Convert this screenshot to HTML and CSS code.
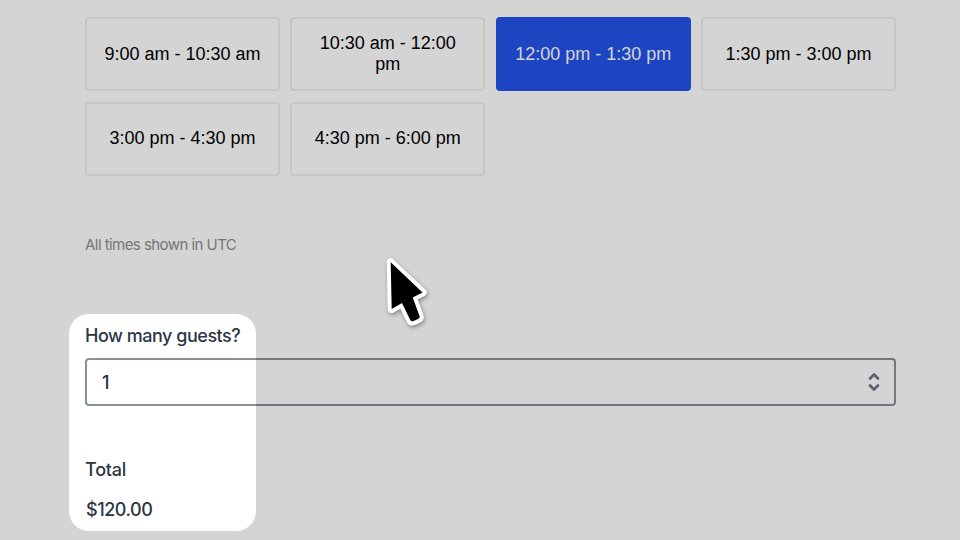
FILE: index.html
```html
<!DOCTYPE html>
<html lang="en">
<head>
<meta charset="utf-8">
<title>Booking</title>
<link rel="stylesheet" href="styles.css">
</head>
<body>
<main class="page">
  <div class="slots">
    <button class="slot">9:00 am - 10:30 am</button>
    <button class="slot">10:30 am - 12:00 pm</button>
    <button class="slot slot-active">12:00 pm - 1:30 pm</button>
    <button class="slot">1:30 pm - 3:00 pm</button>
    <button class="slot">3:00 pm - 4:30 pm</button>
    <button class="slot">4:30 pm - 6:00 pm</button>
  </div>
  <p class="note">All times shown in UTC</p>
  <p class="label">How many guests?</p>
  <div class="select">
    <span class="select-value">1</span>
    <svg class="chevrons" width="14" height="22" viewBox="0 0 14 22" fill="none" stroke="currentColor" stroke-width="2.6" stroke-linecap="round" stroke-linejoin="round">
      <path d="M3 7.500 7 3.500l4 4"/>
      <path d="M3 14.500 7 18.500l4-4"/>
    </svg>
  </div>
  <p class="total-label">Total</p>
  <p class="total-value">$120.00</p>
</main>
<div class="spotlight"></div>
<svg class="cursor" width="60" height="80" viewBox="380 250 60 80">
  <path d="M390.700 262.300 L422.500 292.500 L412.700 297.500 L419.500 316 Q420.300 318 418 319 L413.500 321 Q411 322 410 319.500 L402 303 L391.700 309 Z" fill="#000" stroke="#fff" stroke-width="8" stroke-linejoin="round" paint-order="stroke"/>
</svg>
</body>
</html>
```
FILE: styles.css
```css
html, body {
  margin: 0;
  height: 100%;
  overflow: hidden;
  background: #fff;
}

.page {
  box-sizing: border-box;
  width: 960px;
  padding: 17px 64px 0 85px;
  font-family: Inter, "Liberation Sans", sans-serif;
  color: #2b3646;
}

.slots {
  display: grid;
  grid-template-columns: repeat(4, 1fr);
  grid-auto-rows: 74px;
  gap: 10.500px;
}

.slot {
  padding: 0 16px;
  border: 2px solid #eeeeee;
  border-radius: 4px;
  background: transparent;
  color: #000;
  font-family: "Liberation Sans", Arial, sans-serif;
  font-size: 18px;
  line-height: 21px;
}

.slot-active {
  border-color: #2352e8;
  background: #2352e8;
  color: #fff;
}

.note {
  margin: 59.500px 0 0;
  font-size: 15px;
  line-height: 20px;
  letter-spacing: -0.55px;
  color: #8f8f8f;
}

.label {
  margin: 70px 0 0;
  font-size: 18px;
  font-weight: 500;
  line-height: 22px;
  letter-spacing: -0.48px;
}

.select {
  display: flex;
  align-items: center;
  justify-content: space-between;
  box-sizing: border-box;
  height: 47.500px;
  margin-top: 11px;
  padding: 0 13px 0 15px;
  border: 2px solid #8a9098;
  border-radius: 4px;
  font-size: 18px;
}

.select-value {
  padding-top: 1px;
  font-weight: 500;
}

.chevrons {
  color: #6b7280;
}

.total-label {
  margin: 53px 0 0;
  font-size: 18px;
  font-weight: 500;
  line-height: 22px;
  letter-spacing: -0.2px;
}

.total-value {
  margin: 18px 0 0 1px;
  font-size: 18px;
  font-weight: 500;
  line-height: 22px;
  letter-spacing: -0.45px;
}

.spotlight {
  position: absolute;
  left: 69px;
  top: 314px;
  width: 187px;
  height: 217px;
  border-radius: 20px;
  box-shadow: 0 0 0 1200px rgba(0, 0, 0, 0.17);
}

.cursor {
  position: absolute;
  left: 380px;
  top: 250px;
  filter: drop-shadow(1px 2px 2px rgba(0, 0, 0, 0.35));
}
```
